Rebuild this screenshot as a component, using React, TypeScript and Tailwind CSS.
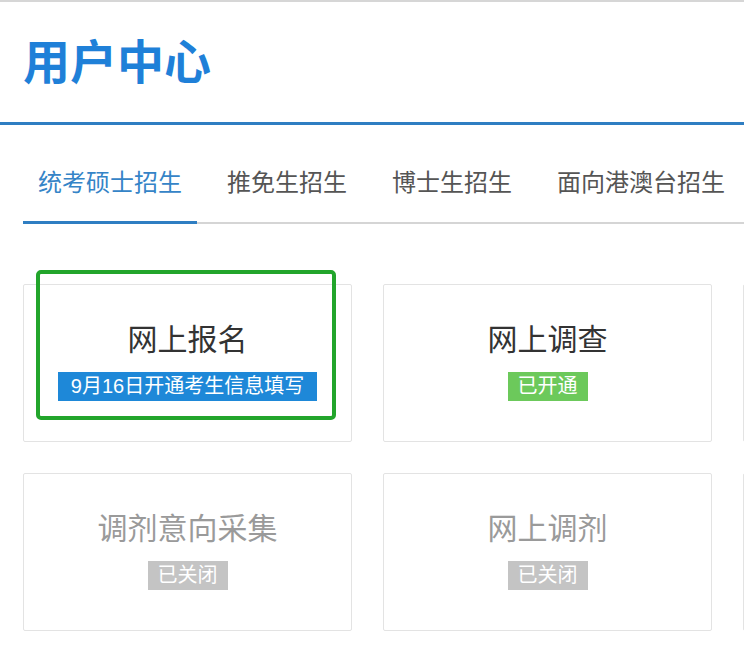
const cjk = "font-['Liberation_Sans','Noto_Sans_CJK_SC',sans-serif]";

type Entry = {
  title: string;
  badge: string;
  tone: "blue" | "green" | "gray";
  highlight?: boolean;
};

const tabs = ["统考硕士招生", "推免生招生", "博士生招生", "面向港澳台招生"];

const rows: (Entry | null)[][] = [
  [
    { title: "网上报名", badge: "9月16日开通考生信息填写", tone: "blue", highlight: true },
    { title: "网上调查", badge: "已开通", tone: "green" },
    null,
  ],
  [
    { title: "调剂意向采集", badge: "已关闭", tone: "gray" },
    { title: "网上调剂", badge: "已关闭", tone: "gray" },
    null,
  ],
];

const badgeTone = {
  blue: "bg-[#1e88d8] px-[13px]",
  green: "bg-[#6cc95b] px-[10px]",
  gray: "bg-[#c4c4c4] px-[10px]",
};

function Card({ entry }: { entry: Entry | null }) {
  return (
    <div className="relative h-[158px] w-[329px] shrink-0 rounded-[2px] border border-[#e3e3e3] bg-white">
      {entry && (
        <div className="flex flex-col items-center pt-[35px]">
          <div
            className={`text-[30px] leading-[40px] ${entry.tone === "gray" ? "text-[#9a9a9a]" : "text-[#333]"}`}
          >
            {entry.title}
          </div>
          <div className={`mt-[12px] h-[29px] text-[20px] leading-[29px] text-white ${badgeTone[entry.tone]}`}>
            {entry.badge}
          </div>
        </div>
      )}
      {entry?.highlight && (
        <div className="absolute left-[12px] -top-[15px] h-[150px] w-[300px] rounded-[5px] border-4 border-[#22a52b]" />
      )}
    </div>
  );
}

export default function App() {
  return (
    <div className={`h-[669px] w-[744px] overflow-hidden border-t-2 border-[#d6d6d6] bg-white ${cjk}`}>
      <header className="flex h-[123px] items-center border-b-[3px] border-[#2f7ec2] pl-[23px]">
        <h1 className="text-[47px] font-bold leading-none text-[#1f80d8]">用户中心</h1>
      </header>

      <nav className="ml-[23px] mt-[40px] flex gap-[15px] border-b-2 border-[#d5d5d5]">
        {tabs.map((t, i) => (
          <div
            key={t}
            className={`-mb-[2px] shrink-0 whitespace-nowrap px-[15px] pb-[20px] text-[24px] leading-[36px] ${
              i === 0 ? "border-b-[3px] border-[#2f7ec2] text-[#3584c7]" : "border-b-[3px] border-transparent text-[#555]"
            }`}
          >
            {t}
          </div>
        ))}
      </nav>

      <main className="ml-[23px] mt-[60px] flex flex-col gap-[31px]">
        {rows.map((row, r) => (
          <div key={r} className="flex gap-[31px]">
            {row.map((entry, c) => (
              <Card key={c} entry={entry} />
            ))}
          </div>
        ))}
      </main>
    </div>
  );
}
